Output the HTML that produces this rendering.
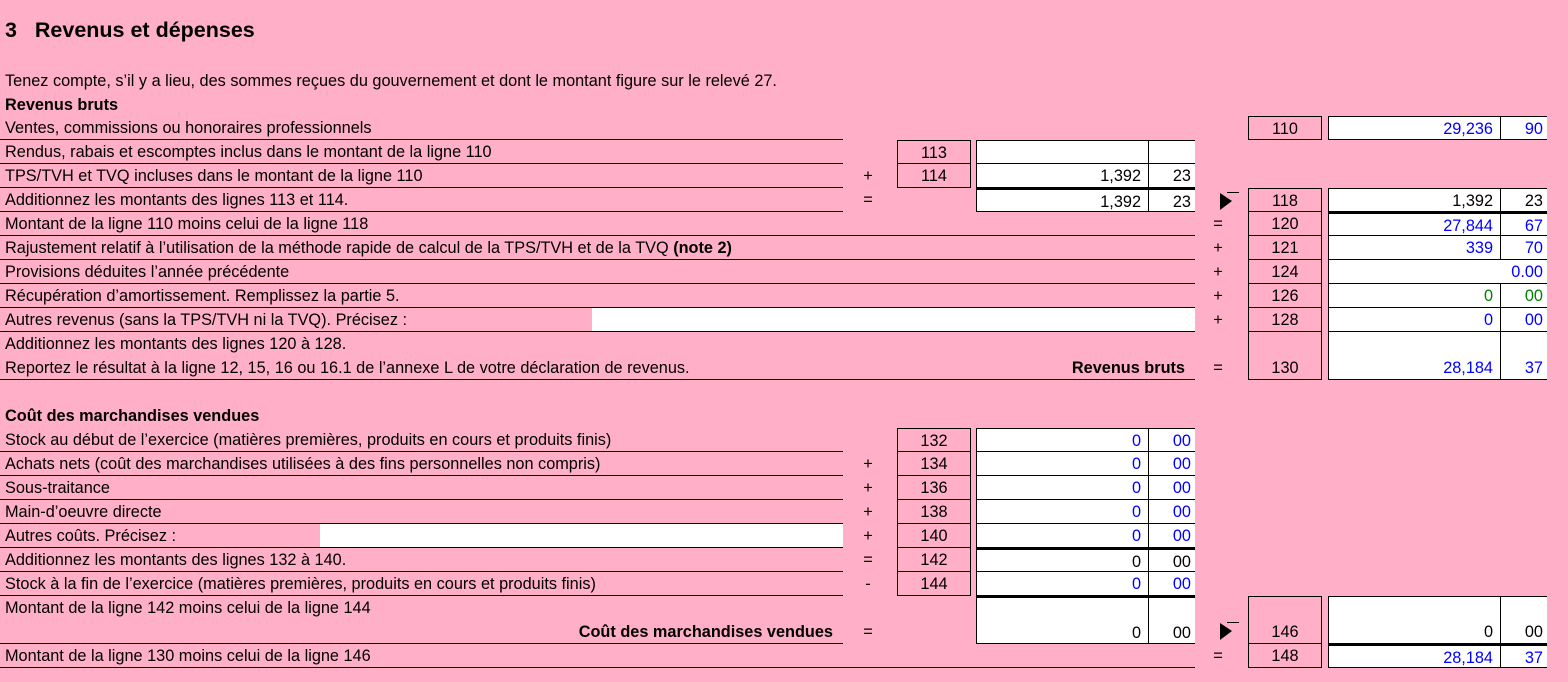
<!DOCTYPE html>
<html><head><meta charset="utf-8">
<style>
body{margin:0;width:1568px;height:682px;background:#ffafc8;font-family:"Liberation Sans",Arial,sans-serif;font-size:16.3px;color:#000;position:relative;overflow:hidden}
div{position:absolute;box-sizing:border-box}
.r{left:0;height:24px;line-height:25px;border-bottom:1px solid #000;padding-left:5px;white-space:nowrap}
.s{width:20px;text-align:center;height:24px;line-height:25px}
.c{border:1px solid #000;text-align:center;height:24px;line-height:24px;width:74px}
.a{background:#fff;border-left:1px solid #000;border-top:1px solid #000;border-bottom:1px solid #000;text-align:right;padding-right:7px;line-height:24px;height:24px;width:172px}
.ct{background:#fff;border-left:1px solid #000;border-top:1px solid #000;border-bottom:1px solid #000;text-align:right;padding-right:4px;line-height:24px;height:24px;width:47px}
.b{color:#0000ff}.g{color:#008000}
.tk{border-bottom:3px solid #000}
.w{background:#fff;height:23px}
.t{white-space:nowrap}
.rr{position:absolute;right:10px;font-weight:bold}
</style></head><body>
<div class="t" style="left:5px;top:16px;font-size:21.5px;font-weight:bold;line-height:28px">3&nbsp;&nbsp;&nbsp;Revenus et dépenses</div>
<div class="t" style="left:5px;top:70px;line-height:22px">Tenez compte, s’il y a lieu, des sommes reçues du gouvernement et dont le montant figure sur le relevé 27.</div>
<div class="t" style="left:5px;top:94px;line-height:22px;font-weight:bold">Revenus bruts</div>

<div class="r" style="top:116px;width:843px">Ventes, commissions ou honoraires professionnels</div>
<div class="r" style="top:140px;width:843px">Rendus, rabais et escomptes inclus dans le montant de la ligne 110</div>
<div class="r" style="top:164px;width:843px">TPS/TVH et TVQ incluses dans le montant de la ligne 110</div>
<div class="r" style="top:188px;width:843px">Additionnez les montants des lignes 113 et 114.</div>
<div class="r" style="top:212px;width:1195px">Montant de la ligne 110 moins celui de la ligne 118</div>
<div class="r" style="top:236px;width:1195px">Rajustement relatif à l’utilisation de la méthode rapide de calcul de la TPS/TVH et de la TVQ <b>(note 2)</b></div>
<div class="r" style="top:260px;width:1195px">Provisions déduites l’année précédente</div>
<div class="r" style="top:284px;width:1195px">Récupération d’amortissement. Remplissez la partie 5.</div>
<div class="w" style="left:592px;top:308px;width:603px"></div>
<div class="r" style="top:308px;width:1195px">Autres revenus (sans la TPS/TVH ni la TVQ). Précisez :</div>
<div class="t" style="left:5px;top:332px;line-height:25px">Additionnez les montants des lignes 120 à 128.</div>
<div class="r" style="top:356px;width:1195px">Reportez le résultat à la ligne 12, 15, 16 ou 16.1 de l’annexe L de votre déclaration de revenus.<span class="rr">Revenus bruts</span></div>

<div class="t" style="left:5px;top:404px;line-height:25px;font-weight:bold">Coût des marchandises vendues</div>
<div class="r" style="top:428px;width:843px">Stock au début de l’exercice (matières premières, produits en cours et produits finis)</div>
<div class="r" style="top:452px;width:843px">Achats nets (coût des marchandises utilisées à des fins personnelles non compris)</div>
<div class="r" style="top:476px;width:843px">Sous-traitance</div>
<div class="r" style="top:500px;width:843px">Main-d’oeuvre directe</div>
<div class="w" style="left:320px;top:524px;width:523px"></div>
<div class="r" style="top:524px;width:843px">Autres coûts. Précisez :</div>
<div class="r" style="top:548px;width:843px">Additionnez les montants des lignes 132 à 140.</div>
<div class="r" style="top:572px;width:843px">Stock à la fin de l’exercice (matières premières, produits en cours et produits finis)</div>
<div class="t" style="left:5px;top:596px;line-height:25px">Montant de la ligne 142 moins celui de la ligne 144</div>
<div class="r" style="top:620px;width:843px"><span class="rr">Coût des marchandises vendues</span></div>
<div class="r" style="top:644px;width:1195px">Montant de la ligne 130 moins celui de la ligne 146</div>

<div class="s" style="left:858px;top:164px">+</div>
<div class="s" style="left:858px;top:188px">=</div>
<div class="s" style="left:858px;top:452px">+</div>
<div class="s" style="left:858px;top:476px">+</div>
<div class="s" style="left:858px;top:500px">+</div>
<div class="s" style="left:858px;top:524px">+</div>
<div class="s" style="left:858px;top:548px">=</div>
<div class="s" style="left:858px;top:572px">-</div>
<div class="s" style="left:858px;top:620px">=</div>

<div class="c" style="left:897px;top:140px">113</div>
<div class="c" style="left:897px;top:163px;height:25px">114</div>
<div class="c" style="left:897px;top:428px">132</div>
<div class="c" style="left:897px;top:451px;height:25px">134</div>
<div class="c" style="left:897px;top:475px;height:25px">136</div>
<div class="c" style="left:897px;top:499px;height:25px">138</div>
<div class="c" style="left:897px;top:523px;height:25px">140</div>
<div class="c" style="left:897px;top:547px;height:25px">142</div>
<div class="c" style="left:897px;top:571px;height:25px">144</div>

<div class="a" style="left:976px;top:140px"></div><div class="ct" style="left:1148px;top:140px"></div>
<div class="a tk" style="left:976px;top:163px;height:27px">1,392</div><div class="ct tk" style="left:1148px;top:163px;height:27px">23</div>
<div class="a" style="left:976px;top:189px;height:23px">1,392</div><div class="ct" style="left:1148px;top:189px;height:23px">23</div>

<div class="a b" style="left:976px;top:428px">0</div><div class="ct b" style="left:1148px;top:428px">00</div>
<div class="a b" style="left:976px;top:451px;height:25px">0</div><div class="ct b" style="left:1148px;top:451px;height:25px">00</div>
<div class="a b" style="left:976px;top:475px;height:25px">0</div><div class="ct b" style="left:1148px;top:475px;height:25px">00</div>
<div class="a b" style="left:976px;top:499px;height:25px">0</div><div class="ct b" style="left:1148px;top:499px;height:25px">00</div>
<div class="a b tk" style="left:976px;top:523px;height:27px">0</div><div class="ct b tk" style="left:1148px;top:523px;height:27px">00</div>
<div class="a" style="left:976px;top:549px;height:23px">0</div><div class="ct" style="left:1148px;top:549px;height:23px">00</div>
<div class="a b tk" style="left:976px;top:571px;height:27px">0</div><div class="ct b tk" style="left:1148px;top:571px;height:27px">00</div>
<div class="a" style="left:976px;top:597px;height:47px;padding-top:23px">0</div><div class="ct" style="left:1148px;top:597px;height:47px;padding-top:23px">00</div>

<svg style="position:absolute;left:1218px;top:190px" width="24" height="22"><polygon points="2,3 14,11 2,20" fill="#000"/><line x1="9" y1="2.5" x2="21" y2="2.5" stroke="#000"/></svg>
<svg style="position:absolute;left:1218px;top:620px" width="24" height="22"><polygon points="2,3 14,11 2,20" fill="#000"/><line x1="9" y1="2.5" x2="21" y2="2.5" stroke="#000"/></svg>

<div class="s" style="left:1208px;top:212px">=</div>
<div class="s" style="left:1208px;top:236px">+</div>
<div class="s" style="left:1208px;top:260px">+</div>
<div class="s" style="left:1208px;top:284px">+</div>
<div class="s" style="left:1208px;top:308px">+</div>
<div class="s" style="left:1208px;top:356px">=</div>
<div class="s" style="left:1208px;top:644px">=</div>

<div class="c" style="left:1248px;top:116px">110</div>
<div class="c" style="left:1248px;top:188px">118</div>
<div class="c" style="left:1248px;top:211px;height:25px">120</div>
<div class="c" style="left:1248px;top:235px;height:25px">121</div>
<div class="c" style="left:1248px;top:259px;height:25px">124</div>
<div class="c" style="left:1248px;top:283px;height:25px">126</div>
<div class="c" style="left:1248px;top:307px;height:25px">128</div>
<div class="c" style="left:1248px;top:331px;height:49px;padding-top:24px">130</div>
<div class="c" style="left:1248px;top:596px;height:48px;padding-top:23px">146</div>
<div class="c" style="left:1248px;top:643px;height:25px">148</div>

<div class="a b" style="left:1328px;top:116px">29,236</div><div class="ct b" style="left:1500px;top:116px">90</div>
<div class="a tk" style="left:1328px;top:188px;height:26px">1,392</div><div class="ct tk" style="left:1500px;top:188px;height:26px">23</div>
<div class="a b" style="left:1328px;top:213px;height:23px">27,844</div><div class="ct b" style="left:1500px;top:213px;height:23px">67</div>
<div class="a b" style="left:1328px;top:235px;height:25px">339</div><div class="ct b" style="left:1500px;top:235px;height:25px">70</div>
<div class="a b" style="left:1328px;top:259px;height:25px;width:219px;padding-right:4px">0.00</div>
<div class="a g" style="left:1328px;top:283px;height:25px">0</div><div class="ct g" style="left:1500px;top:283px;height:25px">00</div>
<div class="a b" style="left:1328px;top:307px;height:25px">0</div><div class="ct b" style="left:1500px;top:307px;height:25px">00</div>
<div class="a b" style="left:1328px;top:331px;height:49px;padding-top:24px">28,184</div><div class="ct b" style="left:1500px;top:331px;height:49px;padding-top:24px">37</div>
<div class="a tk" style="left:1328px;top:596px;height:50px;padding-top:23px">0</div><div class="ct tk" style="left:1500px;top:596px;height:50px;padding-top:23px">00</div>
<div class="a b" style="left:1328px;top:645px;height:23px">28,184</div><div class="ct b" style="left:1500px;top:645px;height:23px">37</div>
</body></html>
